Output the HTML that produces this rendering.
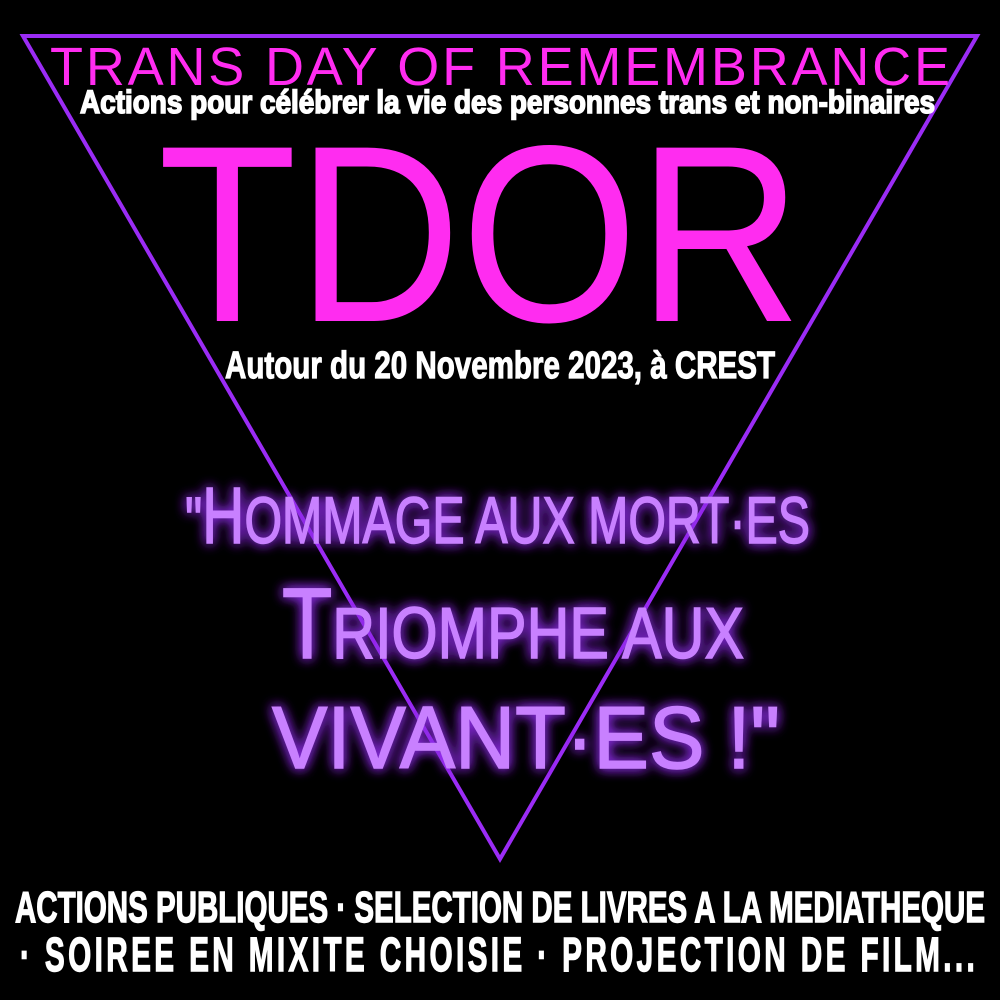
<!DOCTYPE html>
<html><head><meta charset="utf-8"><style>
html,body{margin:0;padding:0;background:#000;width:1000px;height:1000px;overflow:hidden}
svg{display:block}
</style></head><body>
<svg width="1000" height="1000" viewBox="0 0 1000 1000" xmlns="http://www.w3.org/2000/svg">
<defs>
<filter id="glow" x="-20%" y="-40%" width="140%" height="180%">
<feGaussianBlur in="SourceAlpha" stdDeviation="6" result="b"/>
<feFlood flood-color="#8a2be2" flood-opacity="0.9"/>
<feComposite in2="b" operator="in" result="g"/>
<feMerge><feMergeNode in="g"/><feMergeNode in="g"/><feMergeNode in="SourceGraphic"/></feMerge>
</filter>
</defs>
<rect width="1000" height="1000" fill="#000"/>
<polygon points="23,36 977,36 500,859" fill="none" stroke="#9b2cf5" stroke-width="4"/>
<g font-family="Liberation Sans, sans-serif">
<text x="50" y="85" font-size="54" fill="#ff2cf0" textLength="900" lengthAdjust="spacing">TRANS DAY OF REMEMBRANCE</text>
<text x="80" y="113" font-size="32" font-weight="bold" fill="#fff" stroke="#fff" stroke-width="1.6" textLength="855" lengthAdjust="spacingAndGlyphs">Actions pour célébrer la vie des personnes trans et non-binaires</text>
<text x="158" y="321" font-size="252" fill="#ff2cf0" textLength="644" lengthAdjust="spacingAndGlyphs">TDOR</text>
<text x="225" y="378" font-size="38" font-weight="bold" fill="#fff" stroke="#fff" stroke-width="1.2" textLength="550" lengthAdjust="spacingAndGlyphs">Autour du 20 Novembre 2023, à CREST</text>
</g>
<g font-family="Liberation Sans Narrow, Liberation Sans, sans-serif" fill="#c880ff" stroke="#c880ff" stroke-width="1.5" filter="url(#glow)">
<text x="185" y="543" font-size="66" textLength="625" lengthAdjust="spacingAndGlyphs">"<tspan font-size="80">H</tspan>OMMAGE AUX MORT·ES</text>
<text x="282" y="658" font-size="72" textLength="462" lengthAdjust="spacingAndGlyphs"><tspan font-size="100">T</tspan>RIOMPHE AUX</text>
<text x="272" y="768" font-size="88" textLength="508" lengthAdjust="spacingAndGlyphs">VIVANT·ES !"</text>
</g>
<g font-family="Liberation Sans, sans-serif" font-weight="bold" fill="#fff" stroke="#fff" stroke-width="1.4">
<text x="15" y="922" font-size="44" textLength="970" lengthAdjust="spacingAndGlyphs">ACTIONS PUBLIQUES · SELECTION DE LIVRES A LA MEDIATHEQUE</text>
<g transform="translate(20,971) scale(0.62,1)">
<text x="0" y="0" font-size="48" textLength="1540" lengthAdjust="spacing">· SOIREE EN MIXITE CHOISIE · PROJECTION DE FILM...</text>
</g>
</g>
</svg>
</body></html>
